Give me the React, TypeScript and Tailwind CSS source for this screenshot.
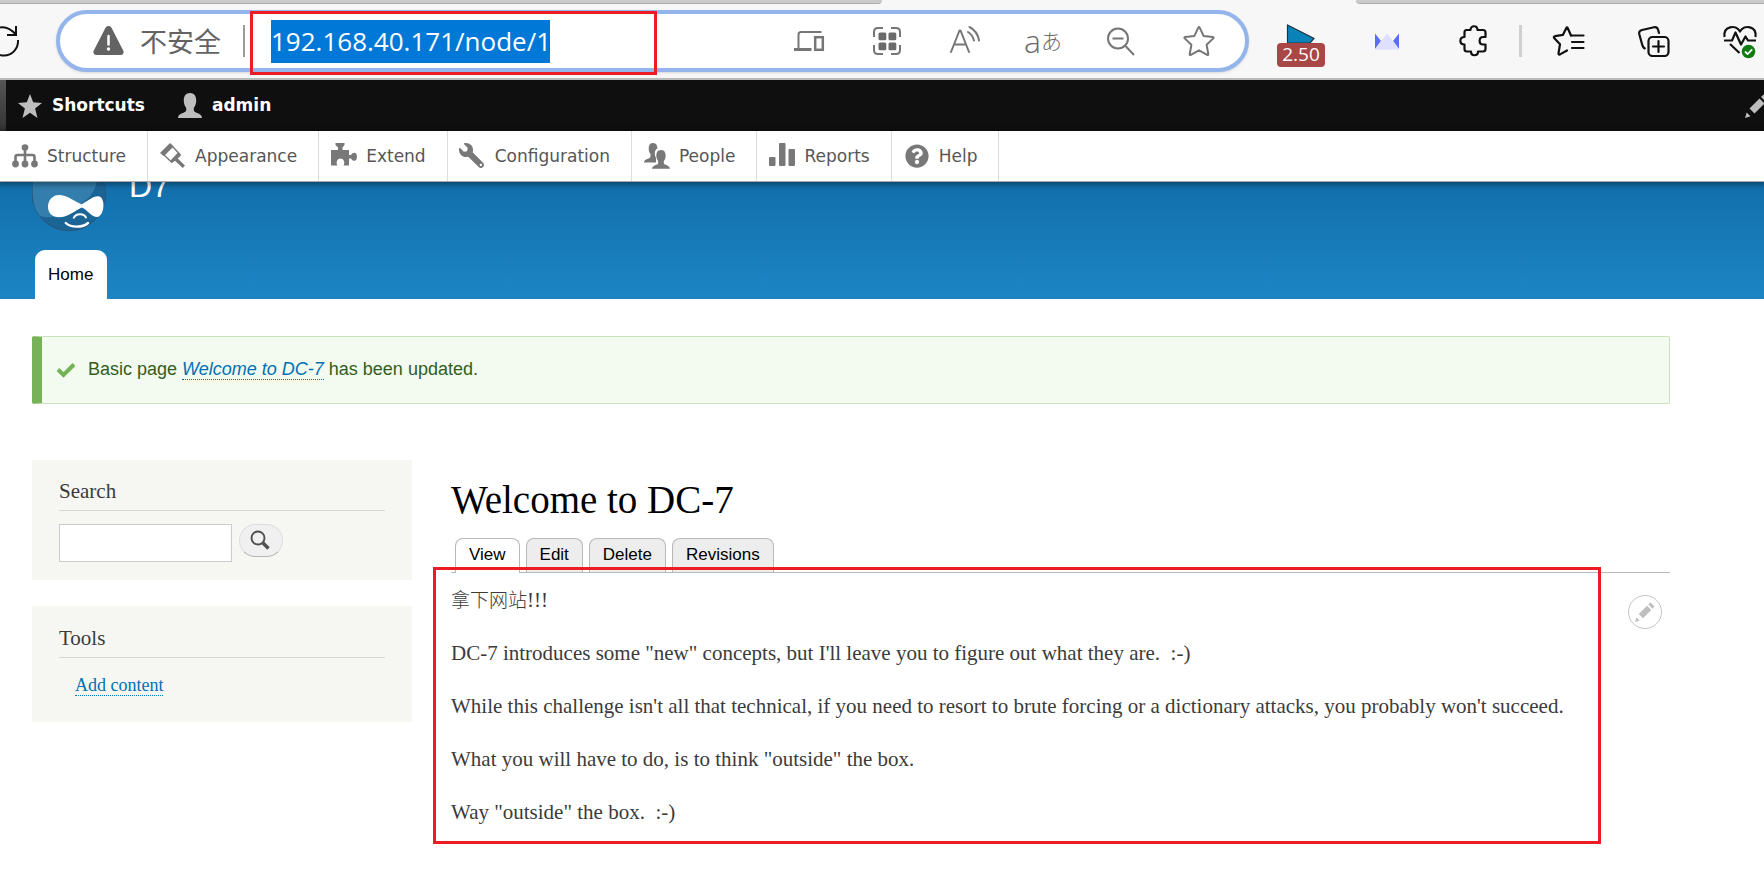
import React from 'react';
import { FaQuestionCircle, FaWrench } from 'react-icons/fa';

type IconProps = { className?: string };

const PERSON =
  'M12 0c5 0 6.3 4 6.2 8 0 3-1.2 5-2.4 7v2.5c0 2.500 8.200 2.500 8.200 7.500H0c0-5 8.200-5 8.200-7.500V15C7 13 5.800 11 5.800 8 5.700 4 7 0 12 0z';

function RefreshIcon() {
  return (
    <svg className="h-8 w-5 shrink-0" viewBox="0 0 20 32" fill="none" stroke="#111" strokeWidth="2">
      <path d="M0 2.500C6 1 11 4 16 9.500M16 1v9H7" />
      <path d="M18 15c.5 9-6 15.500-14 15.500-1.500 0-3-.2-4-.6" />
    </svg>
  );
}

function WarningIcon() {
  return (
    <svg className="h-8 w-[31px] shrink-0" viewBox="0 0 31 32">
      <path d="M12.500 2.800c1.500-2.400 4.500-2.400 6 0l11.700 22.700c1.200 2.300-.2 4.500-2.700 4.500h-24C1 30-.4 27.800.8 25.500z" fill="#636363" />
      <path d="M15.500 11v8.500" stroke="#fff" strokeWidth="2.500" strokeLinecap="round" />
      <circle cx="15.500" cy="24" r="1.700" fill="#fff" />
    </svg>
  );
}

function DevicesIcon() {
  return (
    <svg className="size-8" viewBox="0 0 32 32" fill="none" stroke="#767676">
      <path d="M5.500 23.500V9.500q0-2.500 2.500-2.500h20.500" strokeWidth="2" />
      <path d="M1 24.500h17.500" strokeWidth="3" />
      <rect x="22.200" y="12.200" width="7.600" height="12.600" strokeWidth="2.500" />
    </svg>
  );
}

function AppsIcon() {
  return (
    <svg className="size-8" viewBox="0 0 32 32" fill="none" stroke="#767676" strokeWidth="2">
      <path d="M3 12V7q0-4 4-4h5M20 3h5q4 0 4 4v5M29 20v5q0 4-4 4h-5M12 29H7q-4 0-4-4v-5" />
      <g fill="#6a6a6a" stroke="none">
        <rect x="7.500" y="7.500" width="7.800" height="7.800" rx="1.500" />
        <rect x="17.500" y="7.500" width="7.800" height="7.800" rx="1.500" />
        <rect x="7.500" y="17.500" width="7.800" height="7.800" rx="1.500" />
        <rect x="17.500" y="17.500" width="7.800" height="7.800" rx="1.500" />
      </g>
    </svg>
  );
}

function ReadAloudIcon() {
  return (
    <svg className="size-8" viewBox="0 0 32 32" fill="none" stroke="#767676" strokeWidth="2" strokeLinecap="round" strokeLinejoin="round">
      <path d="M2 27L10.500 5.500h1L20 27M5 19.500h12" />
      <path d="M19 7c3 1.800 5 4.600 6 8.500M20.500 2c5.500 2.800 8.500 7.500 9.500 13.500" />
    </svg>
  );
}

function ZoomOutIcon() {
  return (
    <svg className="size-8" viewBox="0 0 32 32" fill="none" stroke="#767676" strokeWidth="2">
      <circle cx="13" cy="13.500" r="10" />
      <path d="M7.500 13.500h11M20.500 21L29 30" />
    </svg>
  );
}

function StarIcon() {
  return (
    <svg className="size-8" viewBox="0 0 32 32" fill="none" stroke="#767676" strokeWidth="2" strokeLinejoin="round">
      <path d="M15.300 2.600q.7-1.300 1.400 0l3.900 8.300 9.200 1.200q1.400.3.500 1.300l-6.700 6.400 1.700 9.200q.1 1.400-1.100.8L16 25.300l-8.200 4.500q-1.200.6-1.100-.8l1.700-9.200-6.700-6.400q-.9-1 .5-1.300l9.200-1.200z" />
    </svg>
  );
}

function PlaybackIcon() {
  return (
    <svg className="h-5 w-12" viewBox="0 0 48 20">
      <path d="M10.500 2L37 15.500l-4 4.500h-22.500z" fill="#0a84b8" stroke="#1c3440" strokeWidth="1.200" />
    </svg>
  );
}

function BowTieIcon() {
  return (
    <svg className="h-8 w-12" viewBox="0 0 48 32">
      <path d="M12 8.500l6 7.500-6 8z" fill="#5b6cf9" />
      <path d="M36 8.500l-6 7.500 6 8z" fill="#5b6cf9" />
      <path d="M12 24.500l6-8.500L24 8.500l6 7.500 6 8.500z" fill="#dfe0ff" />
    </svg>
  );
}

function PuzzleIcon() {
  return (
    <svg className="h-8 w-12" viewBox="0 0 48 32" fill="none" stroke="#111" strokeWidth="2.200" strokeLinejoin="round">
      <path d="M17.500 5h4c0-5 7-5 7 0H34q2.500 0 2.500 2.500V12h-2.500c-4.500 0-4.500 7.500 0 7.500h2.500V24q0 2.500-2.500 2.500h-5c0 5-7 5-7 0h-4q-2.500 0-2.500-2.500v-4.500c-5.500 0-5.500-7.500 0-7.500V7.500q0-2.500 2-2.500z" />
    </svg>
  );
}

function FavoritesIcon() {
  return (
    <svg className="h-8 w-12" viewBox="0 0 48 32" fill="none" stroke="#111" strokeWidth="2.200" strokeLinecap="round" strokeLinejoin="round">
      <path d="M27 10.500h12.500M28 17h11.500M28 23h11.500" />
      <path d="M27 10.500L23.800 3.200q-.8-1.600-1.600 0L19 9.800l-8 1.400q-2 .5-.6 2l5.600 6-1.500 9q-.1 2 1.500 1.200l7-3.900" />
    </svg>
  );
}

function CollectionsIcon() {
  return (
    <svg className="h-8 w-12" viewBox="0 0 48 32" fill="none" stroke="#111" strokeWidth="2.200" strokeLinecap="round" strokeLinejoin="round">
      <rect x="18.500" y="12" width="20" height="19" rx="4" />
      <path d="M28.500 16v11M23 21.500h11M29 8l-1-3.500q-1-3-4-2.300L12 5Q8.500 6 9.300 9.300L12 19q1 4 2.800 4.300" />
    </svg>
  );
}

function HeartIcon() {
  return (
    <svg className="h-9 w-12" viewBox="0 0 48 36" fill="none" stroke="#111" strokeWidth="2.200" strokeLinejoin="round">
      <path d="M8.500 14C7 3 19.500 1 24 8.500 28.500 1 41 3 39.500 14" />
      <path d="M8 17.500h8l3.500-8 5.500 12 4.500-8 2.500 4h8M14 21l9.500 9" />
      <circle cx="32.500" cy="28.500" r="6.800" fill="#0f7b10" stroke="none" />
      <path d="M29 28.500l2.600 2.600 4.600-4.800" stroke="#fff" strokeWidth="1.800" />
    </svg>
  );
}

function PencilShape() {
  return (
    <>
      <path d="M4.500 14.500L14.500 4.500 19.500 9.500 9.500 19.500z" />
      <path d="M16 3L18.500.5 23.500 5.500 21 8z" />
      <path d="M0 24L1.700 18.500 5.500 22.300z" />
    </>
  );
}

function StructureIcon({ className }: IconProps) {
  return (
    <svg className={className} viewBox="0 0 28 28" fill="#787878">
      <path d="M4.500 21v-6q0-2 2-2h15q2 0 2 2v6M14 5v17" fill="none" stroke="#787878" strokeWidth="2.600" />
      <circle cx="14" cy="5.500" r="3.300" />
      <circle cx="4.500" cy="22" r="3.400" />
      <circle cx="14" cy="22" r="3.400" />
      <circle cx="23.500" cy="22" r="3.400" />
    </svg>
  );
}

function AppearanceIcon({ className }: IconProps) {
  return (
    <svg className={className} viewBox="0 0 28 28" fill="#787878">
      <path d="M11 1L14.500 4.300 4.500 14 1 11z" />
      <path d="M13.500 4.500L21 12.500 12.500 20 5 13z" fill="none" stroke="#787878" strokeWidth="1.400" />
      <path d="M19 10.500L22 13.500 18.700 16.500 26 23.500 23.700 26 16 18.800 13 21 11 19z" />
    </svg>
  );
}

function ExtendIcon({ className }: IconProps) {
  return (
    <svg className={className} viewBox="0 0 28 28" fill="#787878">
      <path d="M1 8h7V5.500L5.500 3V1h9v2L12.500 5.500V8H19v5h2c1-1.500 2-2.200 3.500-2.200 3.300 0 3.300 8 0 8-1.500 0-2.500-.8-3.500-2.300h-2V23.500h-5.500c2-3.500 0-7-3-7s-5 3.500-3 7H1z" />
    </svg>
  );
}

function PeopleIcon({ className }: IconProps) {
  return (
    <svg className={className} viewBox="0 0 28 28" fill="#787878">
      <path d="M10 1c3.500 0 4.500 3 4.300 5.500-3 1.500-3 6-1.300 9.500v4.500H1c0-4 6.500-3.500 6.500-6V12C6 10.500 5.700 8.500 5.700 6.500 5.700 3 7 1 10 1z" />
      <g transform="translate(9 8) scale(.75)">
        <path d={PERSON} />
      </g>
    </svg>
  );
}

function ReportsIcon({ className }: IconProps) {
  return (
    <svg className={className} viewBox="0 0 28 28" fill="#787878">
      <rect x="1" y="15" width="6.500" height="9" rx="1" />
      <rect x="11" y="1" width="6.500" height="23" rx="1" />
      <rect x="20.500" y="7" width="6.500" height="17" rx="1" />
    </svg>
  );
}

function WrenchIcon({ className }: IconProps) {
  return (
    <span className={className}>
      <FaWrench className="mt-px size-[25px] -scale-x-100 text-[#787878]" />
    </span>
  );
}

function HelpIcon({ className }: IconProps) {
  return (
    <span className={className}>
      <FaQuestionCircle className="mt-[2px] ml-[2px] size-6 text-[#787878]" />
    </span>
  );
}

function DruplIcon() {
  return (
    <svg className="h-[50px] w-[75px]" viewBox="32 182 75 50">
      <circle cx="69" cy="194" r="36.800" fill="#1b6496" stroke="#2a5878" strokeWidth="1" />
      <path d="M33 182H96.500C95 192 88 200 80 204 70 213 52 220 40 216 33 208 32 196 33 182z" fill="#337ead" />
      <path
        d="M59 195c8 0 15 6 22.500 9.300 6-3 11-8 16.500-8 8 0 7 20-1 20.800-5 0-9-6.500-15-9.600-7 3-14 9.800-23 9.800-7 0-11-4.500-11-10.500 0-7 5-11.800 11-11.800z"
        fill="#fff"
      />
      <path d="M73.500 218.500c2-5.500 11-5.500 12.700-.3" fill="none" stroke="#fff" strokeWidth="2" />
      <path d="M65.800 223c5 4.800 17 4.800 22.200 0" fill="none" stroke="#fff" strokeWidth="2.400" strokeLinecap="round" />
    </svg>
  );
}

function BrowserBar() {
  return (
    <header className="border-b-2 border-[#b9b9b9] bg-[#f7f7f7]">
      <div className="flex justify-between">
        <div className="h-1 w-1/2 rounded-br-lg border-b border-[#adadad] bg-[#cbcbcb]" />
        <div className="h-1 w-[408px] rounded-bl-lg border-b border-[#adadad] bg-[#cbcbcb]" />
      </div>
      <div className="flex h-[74px] items-center">
        <button aria-label="Refresh" className="mr-9">
          <RefreshIcon />
        </button>
        <div className="flex h-[62px] flex-1 items-center rounded-full border-4 border-[#93b5eb] bg-white pr-[30px] pl-[33px] shadow-sm">
          <WarningIcon />
          <label htmlFor="address" className="ml-4 font-['Noto_Sans_CJK_SC',sans-serif] text-[27px] leading-8 whitespace-nowrap text-[#636363]">
            不安全
          </label>
          <div className="ml-[22px] h-8 w-[2px] bg-[#9a9a9a]" />
          <div className="relative ml-[5px] flex h-full w-[407px] items-center pl-[21px]">
            <input
              id="address"
              type="text"
              defaultValue="192.168.40.171/node/1"
              className="h-[43px] w-[279px] bg-[#0078d7] font-['Open_Sans',sans-serif] text-[26px] text-white outline-none"
            />
            <div className="pointer-events-none absolute inset-x-0 -top-[3px] -bottom-[7px] border-3 border-[#ed1c24]" />
          </div>
          <div className="ml-auto flex items-center gap-[46px]">
            <button aria-label="Send to devices"><DevicesIcon /></button>
            <button aria-label="Apps"><AppsIcon /></button>
            <button aria-label="Read aloud"><ReadAloudIcon /></button>
            <button
              aria-label="Translate"
              className="flex w-8 items-center justify-center font-['Open_Sans','Noto_Sans_CJK_JP',sans-serif] font-light text-[#6a6a6a]"
            >
              <span className="text-[32px] leading-8">a</span>
              <span className="text-[21px] leading-8">あ</span>
            </button>
            <button aria-label="Zoom out"><ZoomOutIcon /></button>
            <button aria-label="Add to favorites"><StarIcon /></button>
          </div>
        </div>
        <div className="flex shrink-0 items-center overflow-hidden pl-7">
          <div className="flex items-center gap-[38px]">
            <button aria-label="Playback speed" className="flex flex-col pt-2">
              <PlaybackIcon />
              <span className="h-6 w-12 rounded-sm bg-[#a94646] text-center font-['Open_Sans',sans-serif] text-[19px] leading-[22px] text-white">
                2.50
              </span>
            </button>
            <button aria-label="Bookmark extension"><BowTieIcon /></button>
            <button aria-label="Extensions"><PuzzleIcon /></button>
          </div>
          <div className="mx-[22px] h-8 w-[3px] bg-[#d0d0d0]" />
          <div className="flex items-center gap-[38px]">
            <button aria-label="Favorites"><FavoritesIcon /></button>
            <button aria-label="Collections"><CollectionsIcon /></button>
            <button aria-label="Browser essentials"><HeartIcon /></button>
          </div>
        </div>
      </div>
    </header>
  );
}

function AdminBar() {
  return (
    <nav
      aria-label="Toolbar"
      className="flex h-[51px] items-center bg-[#0f0f0f] font-[Verdana,'DejaVu_Sans',sans-serif] text-[17px] font-bold text-white"
    >
      <div className="h-full w-[6px] bg-linear-to-b from-[#555] to-[#333]" />
      <a href="#shortcuts" className="ml-3 flex items-center gap-[10px]">
        <svg className="size-6" viewBox="0 0 24 24" fill="#bebebe">
          <path d="M12 0l3.200 8.300 8.800.7-6.900 5.500L19.500 24 12 18.800 4.500 24l2.400-9.500L0 9l8.800-.7z" />
        </svg>
        Shortcuts
      </a>
      <a href="#admin" className="ml-[33px] flex items-center gap-[10px]">
        <svg className="h-[25px] w-6" viewBox="0 0 24 25" fill="#bebebe">
          <path d={PERSON} />
        </svg>
        admin
      </a>
      <button aria-label="Edit" className="ml-auto">
        <svg className="h-6 w-[19px]" viewBox="0 0 19 24" fill="#bebebe">
          <PencilShape />
        </svg>
      </button>
    </nav>
  );
}

const TRAY = [
  { label: 'Structure', Icon: StructureIcon },
  { label: 'Appearance', Icon: AppearanceIcon },
  { label: 'Extend', Icon: ExtendIcon },
  { label: 'Configuration', Icon: WrenchIcon },
  { label: 'People', Icon: PeopleIcon },
  { label: 'Reports', Icon: ReportsIcon },
  { label: 'Help', Icon: HelpIcon },
];

function AdminTray() {
  return (
    <nav
      aria-label="Administration menu"
      className="relative z-10 flex h-[51px] border-b border-[#aaa] bg-white font-[Verdana,'DejaVu_Sans',sans-serif] text-[17px] text-[#565656] shadow-[0_1px_5px_2px_rgba(0,0,0,0.35)]"
    >
      {TRAY.map(({ label, Icon }) => (
        <a key={label} href="#admin-menu" className="flex items-center gap-2 border-r border-[#ddd] pr-[21px] pl-[11px]">
          <Icon className="size-7" />
          <span className="pt-[2px]">{label}</span>
        </a>
      ))}
    </nav>
  );
}

function SiteHeader() {
  return (
    <div className="flex h-[117px] flex-col justify-between overflow-hidden bg-linear-to-b from-[#116fab] to-[#1d85c4] px-8 font-['Liberation_Sans',Arial,sans-serif]">
      <div className="flex items-start gap-[22px]">
        <DruplIcon />
        <div className="flex h-5 items-end overflow-hidden">
          <a href="#home" className="text-[32px] leading-8 text-white">D7</a>
        </div>
      </div>
      <nav aria-label="Main navigation" className="flex pl-[3px]">
        <a href="#home" className="rounded-t-[10px] bg-white pr-[14px] pl-[13px] text-[17px] leading-[49px] text-black">
          Home
        </a>
      </nav>
    </div>
  );
}

function StatusMessage() {
  return (
    <div
      role="status"
      className="flex h-[68px] items-center rounded-[2px] border border-l-10 border-[#c9e1bd] border-l-[#77b259] bg-[#f3faef] pl-[14px] font-['Liberation_Sans',Arial,sans-serif] text-[18px] text-[#325e1c]"
    >
      <svg className="mr-3 h-4 w-5" viewBox="0 0 20 16">
        <path d="M2 7.500L7.500 13 18 2.500" fill="none" stroke="#73b355" strokeWidth="4" />
      </svg>
      <p className="pb-[2px] leading-5">
        Basic page{' '}
        <a href="#node-1" className="border-b border-dotted border-[#0071b3] text-[#0071b3] italic">Welcome to DC-7</a>{' '}
        has been updated.
      </p>
    </div>
  );
}

function Sidebar() {
  return (
    <aside className="flex w-[380px] shrink-0 flex-col gap-[26px]">
      <section className="bg-[#f6f6f2] px-[27px] pt-[17px] pb-[18px]">
        <h2 className="border-b border-[#d6d6d6] pb-[4px] text-[21px] leading-[29px]">
          <label htmlFor="search">Search</label>
        </h2>
        <form className="mt-[13px] flex items-start gap-[7px]" onSubmit={(e) => e.preventDefault()}>
          <input id="search" type="search" className="h-[38px] w-[173px] border border-[#ccc] bg-white px-2" />
          <button
            aria-label="Search"
            className="flex h-[33px] w-11 items-center rounded-full border border-[#ddd] border-b-[#b4b4b4] bg-[#f0f0f0] pb-[2px] pl-[10px]"
          >
            <svg className="size-5" viewBox="0 0 20 20" fill="none" stroke="#505050">
              <circle cx="8" cy="8" r="6.500" strokeWidth="1.900" />
              <path d="M13 13l5.500 5.500" strokeWidth="3.600" />
            </svg>
          </button>
        </form>
      </section>
      <section className="bg-[#f6f6f2] px-[27px] pt-[18px] pb-[22px]">
        <h2 className="border-b border-[#d6d6d6] pb-[4px] text-[21px] leading-[29px]">Tools</h2>
        <ul className="mt-[13px] pl-4 text-[18px] leading-[29px]">
          <li>
            <a href="#add" className="border-b border-dotted border-[#0071b3] text-[#0071b3]">Add content</a>
          </li>
        </ul>
      </section>
    </aside>
  );
}

const TABS = ['View', 'Edit', 'Delete', 'Revisions'];

function Article() {
  return (
    <article className="min-w-0 flex-1 pt-[17px]">
      <h1 className="text-[39px] leading-[46px] text-black">Welcome to DC-7</h1>
      <nav
        aria-label="Tabs"
        className="mt-[15px] flex gap-[6px] border-b border-[#b8b8b8] pl-1 font-['Liberation_Sans',Arial,sans-serif] text-[17px] leading-[31px] text-black"
      >
        {TABS.map((tab, i) => (
          <a
            key={tab}
            href="#tab"
            className={
              i === 0
                ? '-mb-px h-[35px] rounded-t-lg border border-b-0 border-[#b8b8b8] bg-white px-[13px]'
                : 'h-[34px] rounded-t-lg border border-b-0 border-[#b8b8b8] bg-[#ededed] px-[13px]'
            }
          >
            {tab}
          </a>
        ))}
      </nav>
      <div className="relative flex justify-between pt-[14px]">
        <div className="flex flex-col gap-[26px] text-[21px] leading-[27px] whitespace-pre-wrap">
          <p>
            <span className="text-[19px] font-light">拿下网站</span>!!!
          </p>
          <p>DC-7 introduces some "new" concepts, but I'll leave you to figure out what they are.  :-)</p>
          <p>While this challenge isn't all that technical, if you need to resort to brute forcing or a dictionary attacks, you probably won't succeed.</p>
          <p>What you will have to do, is to think "outside" the box.</p>
          <p>Way "outside" the box.  :-)</p>
        </div>
        <button
          aria-label="Open configuration options"
          className="mt-2 mr-2 flex size-[34px] shrink-0 items-center justify-center rounded-full border border-[#c4c4c4] bg-white"
        >
          <svg className="size-5" viewBox="0 0 24 24" fill="#bebebe">
            <PencilShape />
          </svg>
        </button>
        <div className="pointer-events-none absolute -top-[6px] right-[69px] -bottom-[18px] -left-[18px] border-3 border-[#ed1c24]" />
      </div>
    </article>
  );
}

export default function App() {
  return (
    <div className="min-h-screen overflow-hidden bg-white">
      <BrowserBar />
      <AdminBar />
      <AdminTray />
      <SiteHeader />
      <main className="pt-[37px] pr-[94px] pb-10 pl-8 font-[Georgia,'Liberation_Serif','Noto_Sans_CJK_SC',serif] text-[#3b3b3b]">
        <StatusMessage />
        <div className="mt-14 flex items-start gap-[39px]">
          <Sidebar />
          <Article />
        </div>
      </main>
    </div>
  );
}
